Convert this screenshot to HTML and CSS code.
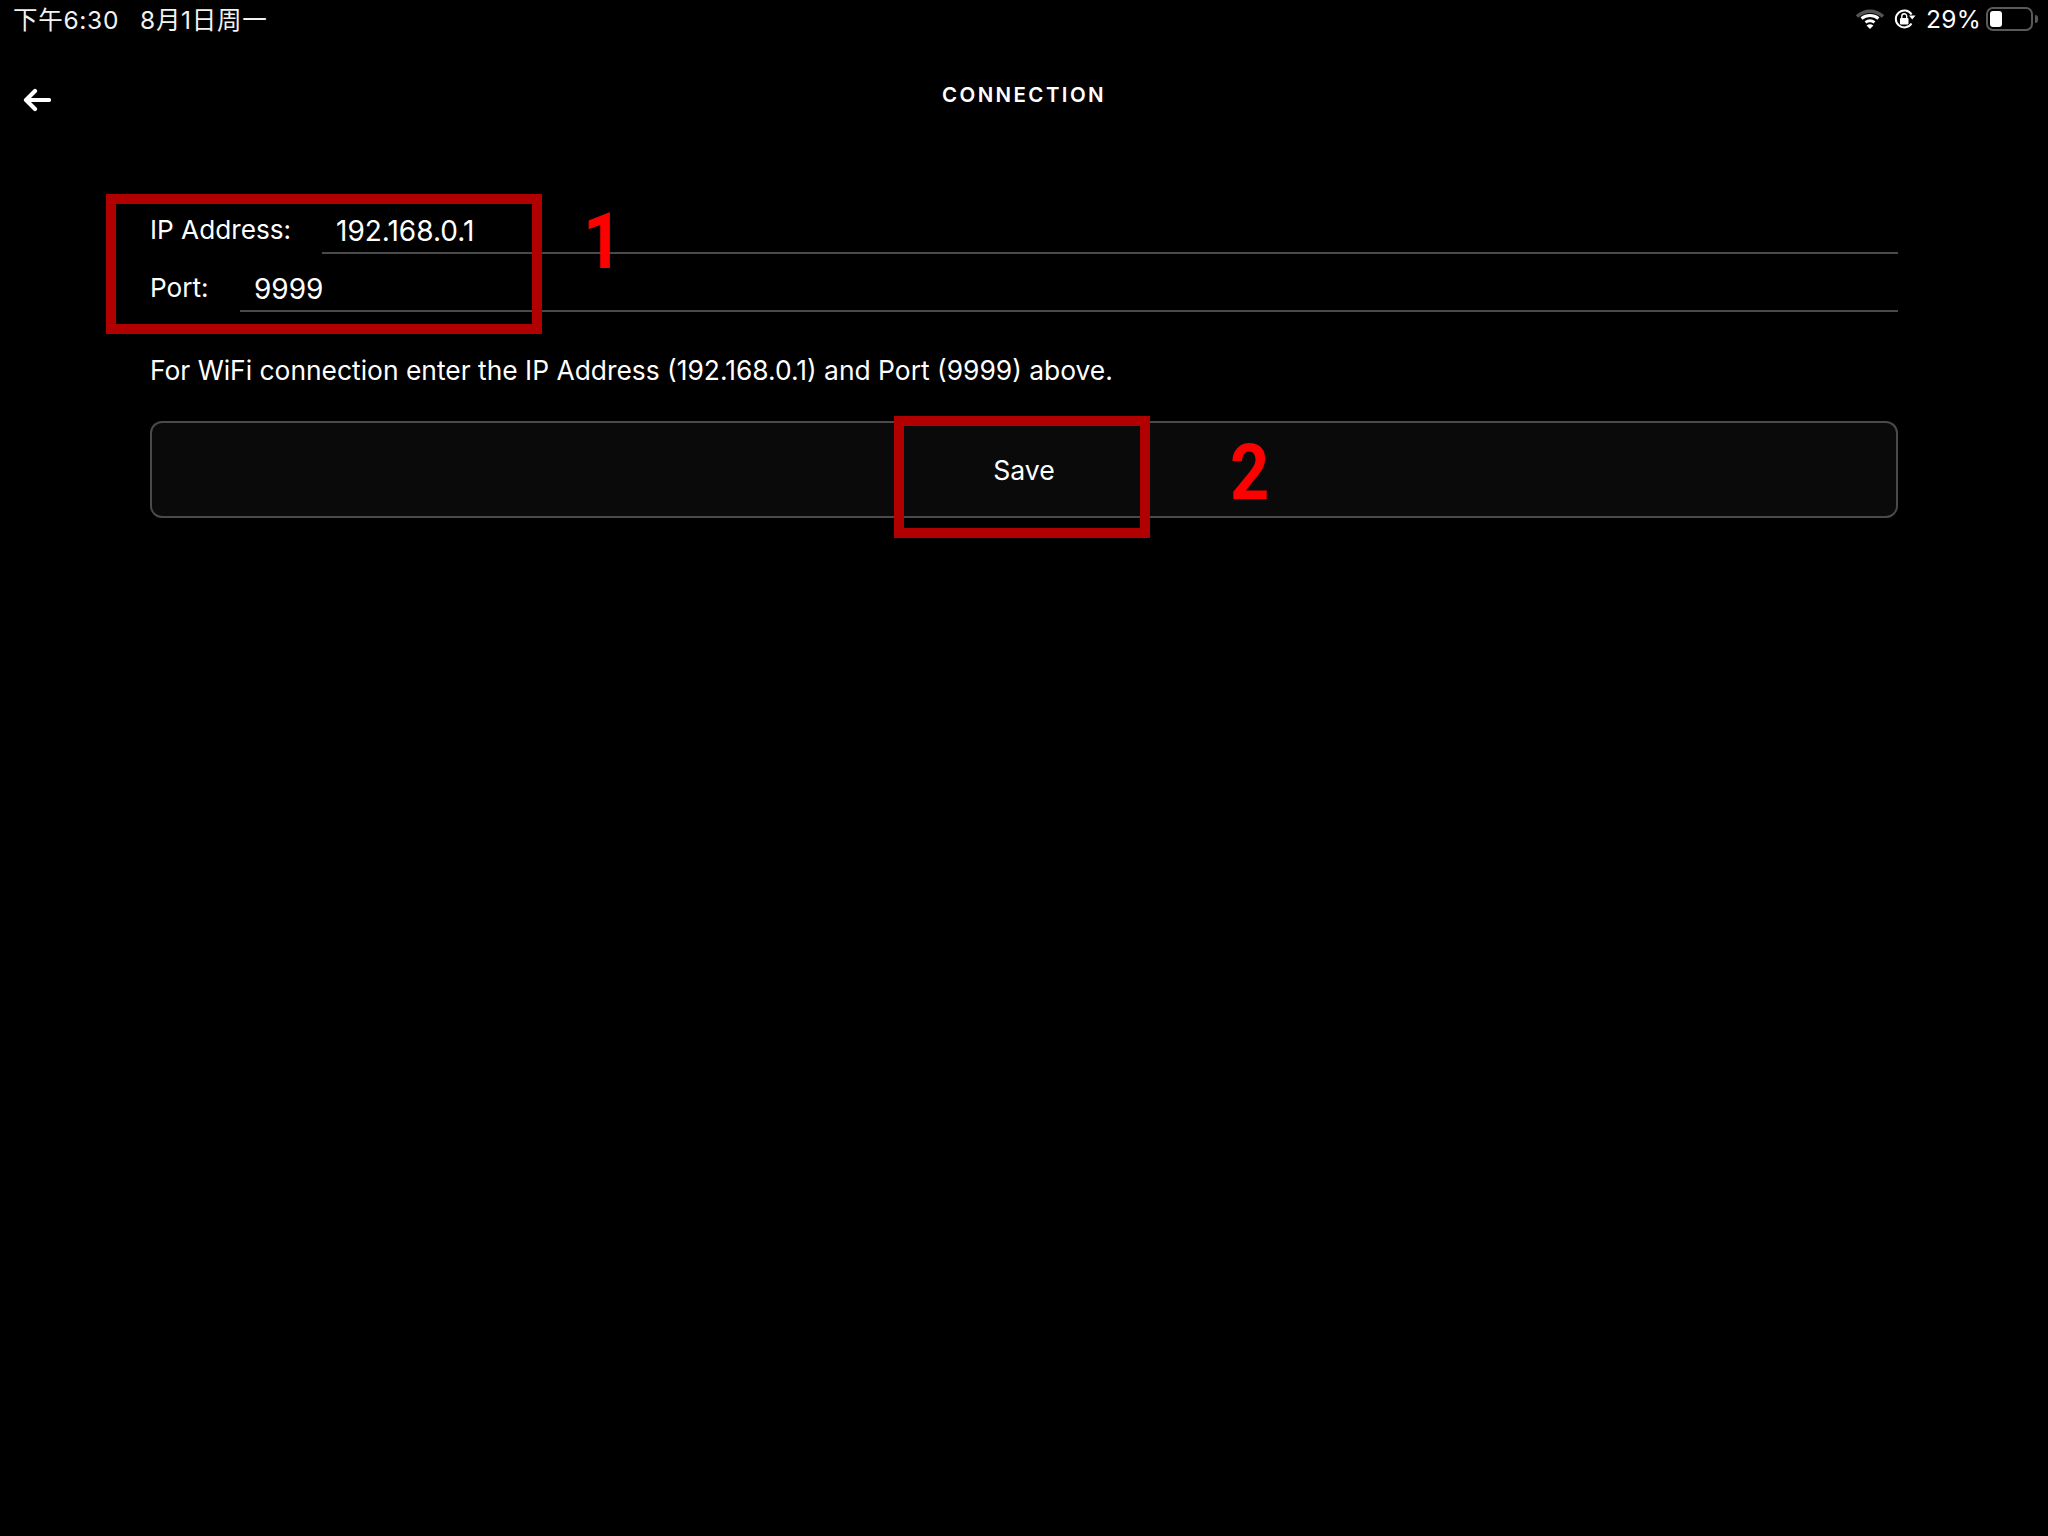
FILE: index.html
```html
<!DOCTYPE html>
<html lang="en">
<head>
<meta charset="utf-8">
<title>Connection</title>
<link rel="stylesheet" href="styles.css">
</head>
<body>
<div class="screen">
  <div class="status">
    <div class="status-left"><span>下午6:30</span><span>8月1日周一</span></div>
    <div class="status-right">
      <svg class="wifi" width="28" height="20" viewBox="0 0 28 20"><path d="M1 7.5C8.5 .5 19.5 .5 27 7.5" fill="none" stroke="#555" stroke-width="3.4"/><path d="M5.5 9.5C10.5 5.5 17.5 5.5 22.5 9.5" fill="none" stroke="#fff" stroke-width="3"/><path d="M9.5 13.4C12.3 11.4 15.7 11.4 18.5 13.4" fill="none" stroke="#fff" stroke-width="3"/><path d="M14 20l-3.4-3.6C12.6 15 15.4 15 17.4 16.4Z" fill="#fff"/></svg>
      <svg class="lock" width="22" height="20" viewBox="0 0 22 20"><path d="M17.5 14.5A8.5 8.5 0 1 1 17.6 5.5" fill="none" stroke="#fff" stroke-width="2"/><path d="M15 6.5L21.5 6.5 18.2 10.5Z" fill="#fff"/><rect x="6" y="9" width="8.5" height="6.5" rx="1" fill="#fff"/><path d="M7.8 9V7.2a2.4 2.4 0 0 1 4.9 0V9" fill="none" stroke="#fff" stroke-width="1.4"/></svg>
      <span class="pct">29%</span>
      <div class="battery"><div class="battery-fill"></div></div>
      <div class="battery-nub"></div>
    </div>
  </div>
  <div class="nav">
    <svg class="back" width="28" height="24" viewBox="0 0 28 24"><path d="M26 12H3.5M12 3L3 12l9 9" fill="none" stroke="#fff" stroke-width="4.2" stroke-linecap="round" stroke-linejoin="round"/></svg>
    <div class="title">CONNECTION</div>
  </div>
  <main class="content">
    <div class="row"><label class="label label-ip">IP Address:</label><div class="field">192.168.0.1</div></div>
    <div class="row"><label class="label label-port">Port:</label><div class="field">9999</div></div>
    <p class="hint">For WiFi connection enter the IP Address (192.168.0.1) and Port (9999) above.</p>
    <button class="save">Save</button>
  </main>
  <div class="mark mark-1"></div>
  <div class="num num-1">1</div>
  <div class="mark mark-2"></div>
  <div class="num num-2">2</div>
</div>
</body>
</html>
```
FILE: styles.css
```css
* { box-sizing: border-box; }
html, body { margin: 0; background: #000; }
.screen {
  position: relative;
  width: 2048px;
  height: 1536px;
  background: #000;
  color: #fff;
  font-family: Inter, "Noto Sans CJK SC", sans-serif;
  overflow: hidden;
}
.status {
  height: 38px;
  display: flex;
  justify-content: space-between;
  align-items: center;
  padding: 0 9px 0 13px;
  font-size: 24px;
}
.status-left { display: flex; gap: 21px; font-size: 24.5px; letter-spacing: 0.7px; color: #f2f2f2; margin-top: -2px; }
.status-right { display: flex; align-items: center; }
.wifi { margin-right: 10px; }
.lock { margin-right: 10px; }
.pct { margin-right: 5px; font-size: 24.5px; letter-spacing: 0.3px; }
.battery {
  width: 47px;
  height: 24px;
  border: 2px solid #5a5a5a;
  border-radius: 7px;
  padding: 2px;
}
.battery-fill { width: 12px; height: 100%; background: #fff; border-radius: 3px; }
.battery-nub { width: 3px; height: 8px; margin-left: 2px; margin-right: 1px; background: #5a5a5a; border-radius: 0 3px 3px 0; }
.nav {
  height: 110px;
  display: flex;
  align-items: flex-start;
  justify-content: center;
  position: relative;
}
.back { position: absolute; left: 23px; top: 50px; }
.title {
  margin-top: 45px;
  font-size: 20.5px;
  line-height: 24px;
  font-weight: 600;
  letter-spacing: 2.4px;
}
.content { padding: 48px 150px 0; display: flex; flex-direction: column; }
.row { display: flex; height: 58px; align-items: flex-end; }
.label { font-size: 26.2px; line-height: 32px; margin-bottom: 8px; }
.label-ip { width: 172px; }
.label-port { width: 90px; }
.field {
  flex: 1;
  height: 58px;
  padding: 0 14px 5px;
  border-bottom: 2px solid #4a4a4a;
  font-size: 28px;
  line-height: 32px;
  display: flex;
  align-items: flex-end;
}
.hint { margin: 42px 0 0; font-size: 26.4px; line-height: 32px; }
.save {
  margin-top: 35px;
  height: 97px;
  padding-top: 2px;
  background: #0a0a0a;
  border: 2px solid #4a4a4a;
  border-radius: 12px;
  color: #fff;
  font-family: inherit;
  font-size: 26.6px;
}
.mark { position: absolute; border: 10px solid #b00000; }
.mark-1 { left: 106px; top: 194px; width: 436px; height: 140px; }
.mark-2 { left: 894px; top: 416px; width: 256px; height: 122px; }
.num {
  position: absolute;
  color: #f00;
  font-family: Roboto, sans-serif;
  font-weight: 700;
  font-size: 78px;
  line-height: 78px;
  transform: scaleX(0.88);
  transform-origin: left top;
}
.num-1 { left: 583px; top: 203px; }
.num-2 { left: 1230px; top: 434px; }
```
